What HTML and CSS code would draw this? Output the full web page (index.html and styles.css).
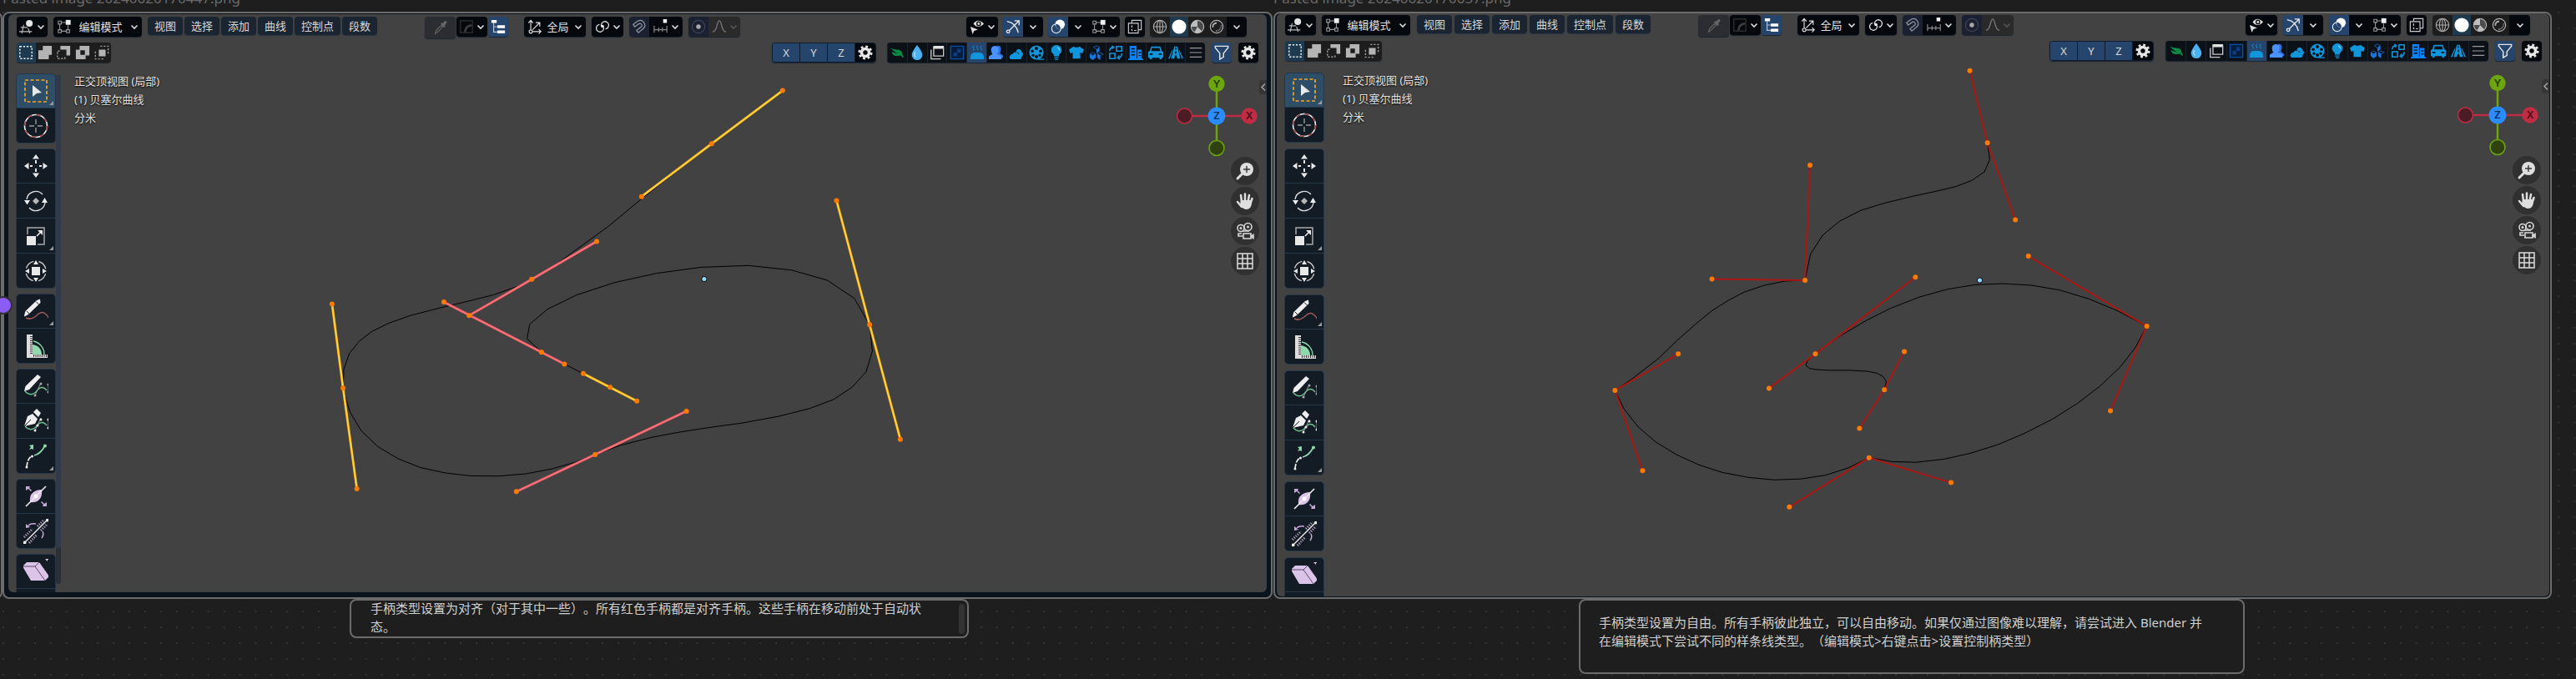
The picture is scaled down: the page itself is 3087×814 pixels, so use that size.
FILE: index.html
```
<!DOCTYPE html>
<html lang="zh-CN">
<head>
<meta charset="utf-8">
<title>曲线手柄类型</title>
<link rel="stylesheet" href="styles.css">
</head>
<body>
<svg class="defs" aria-hidden="true">
  <symbol id="chev" viewBox="0 0 10 10"><path d="M1.500 3.500 5 7l3.500-3.500" fill="none" stroke="currentColor" stroke-width="1.600"/></symbol>
  <symbol id="editor" viewBox="0 0 20 20"><g fill="none" stroke="#bbb" stroke-width="1.300"><path d="M2 11h9M0 16.500h17M6 7.500 3.500 19M12 12l2 7"/></g><circle cx="13.500" cy="5.500" r="4.500" fill="#e4e4e4"/></symbol>
  <symbol id="edit" viewBox="0 0 20 20"><g fill="none" stroke="#9a9a9a" stroke-width="1.200"><path d="M2 2.500h4v4H2zM2 14h4v4H2zM13 14h4v4h-4zM6 4.500h6M4 6.500V14M6 16h7M15 8v6"/></g><rect x="12" y="1" width="6.500" height="6.500" fill="#eee"/></symbol>
  <symbol id="dropper" viewBox="0 0 20 20"><path d="m3 18 1-4 7-7 2 2-7 7z" fill="none" stroke="#666" stroke-width="1.300"/><path d="m10 5 5 5 1.500-1.500-1-1.500 2.500-3q1-2-.5-2.700-1-.8-2.500.7L12.500 4.500 11.500 3.500z" fill="#666"/></symbol>
  <symbol id="curvebox" viewBox="0 0 20 20"><path d="M2 2h16v16H2z" fill="none" stroke="#333" stroke-width="1.300"/><path d="M8 17q1-8 9-9" fill="none" stroke="#3c3c3c" stroke-width="3"/></symbol>
  <symbol id="tree" viewBox="0 0 20 20"><path d="M4 5v12h6M4 10h6" fill="none" stroke="#b8c2d0" stroke-width="1.300"/><path d="M1 1h7v4H1zM9 8h10v4H9zM9 15h10v4H9z" fill="#fff"/></symbol>
  <symbol id="orient" viewBox="0 0 20 20"><g fill="none" stroke="#ddd" stroke-width="1.300"><path d="M4.500 14V2M1.500 5l3-3.500 3 3.500M7 16.500h11M15 13.500l3 3-3 3M7 14l9-9M11 4.500h5.500V10"/><circle cx="4.500" cy="16.500" r="2.200"/></g></symbol>
  <symbol id="pivot" viewBox="0 0 20 20"><g fill="none" stroke="#ddd" stroke-width="1.500"><path d="M8.500 9.500a5 5 0 1 1 5.500 3.500M11.500 10.500A5 5 0 1 1 6 7"/></g><circle cx="10" cy="9.500" r="2" fill="#eee"/></symbol>
  <symbol id="magnet" viewBox="0 0 20 20"><path d="m2 7 6-4.500q5-2.500 8 1.500 3.500 5-.5 8.500L9 18l-2.500-3L13 10q1.500-2-.2-3.500-1.200-1.200-3-.5L4 10z" fill="none" stroke="#8d94a2" stroke-width="1.400"/></symbol>
  <symbol id="snapinc" viewBox="0 0 20 20"><path d="M1 9v9M7 11v6M12 11v6M18 9v9M1 14h17" fill="none" stroke="#888" stroke-width="1.300"/><rect x="13" y="0" width="5" height="5" fill="#eee"/></symbol>
  <symbol id="prop" viewBox="0 0 20 20"><circle cx="10" cy="10" r="8.500" fill="none" stroke="#3c4558" stroke-width="1.300"/><circle cx="10" cy="10" r="3" fill="#aaa"/></symbol>
  <symbol id="falloff" viewBox="0 0 20 20"><path d="M1 17q4 0 6-9 1.500-6 3-6t3 6q2 9 6 9" fill="none" stroke="#777" stroke-width="1.500"/></symbol>
  <symbol id="eye" viewBox="0 0 20 20"><path d="M5 6q6-8 14 0-8 8-14 0z" fill="#ddd"/><circle cx="12" cy="6" r="2.400" fill="none" stroke="#111" stroke-width="1.500"/><path d="m1 10 3 10 2-4.500 5-1.500z" fill="#ddd"/></symbol>
  <symbol id="gizmo" viewBox="0 0 20 20"><g fill="none" stroke="#e6eaf0" stroke-width="1.500"><path d="M2 3q12 2 15 15M5 15 17.500 2.500M12 2h6v6"/><circle cx="3.500" cy="16.500" r="2"/></g></symbol>
  <symbol id="overlay" viewBox="0 0 20 20"><circle cx="12.500" cy="7" r="6.500" fill="#fff"/><circle cx="7.500" cy="12.500" r="6" fill="none" stroke="#dde3ea" stroke-width="1.300"/><path d="M7 10a6.500 6.500 0 0 0 6 3.500 6 6 0 0 0-6-7z" fill="#26456d"/></symbol>
  <symbol id="xray" viewBox="0 0 20 20"><g fill="none" stroke="#ccc" stroke-width="1.300"><path d="M6 5V1.500h12.500V14H15"/><path d="M1.500 5.500h13v13h-13z"/><path d="M6 8v7h6" stroke-dasharray="3 2"/></g></symbol>
  <symbol id="globe" viewBox="0 0 20 20"><g fill="none" stroke="#aaa" stroke-width="1.300"><circle cx="10" cy="10" r="8.500"/><ellipse cx="10" cy="10" rx="4" ry="8.500"/><path d="M1.500 10h17M10 1.500v17"/></g></symbol>
  <symbol id="solid" viewBox="0 0 20 20"><circle cx="10" cy="10" r="9.500" fill="#fff"/></symbol>
  <symbol id="material" viewBox="0 0 20 20"><circle cx="10" cy="10" r="8.500" fill="#4c4c4c" stroke="#b0b0b0" stroke-width="1.300"/><path d="M10 1.500A8.500 8.500 0 0 0 1.500 10H10zM10 10l-4 7.500Q11 20 16 16z" fill="#bdbdbd"/></symbol>
  <symbol id="rendered" viewBox="0 0 20 20"><circle cx="10" cy="10" r="8.500" fill="none" stroke="#b0b0b0" stroke-width="1.300"/><path d="M5 11q-1-5 5-6" fill="none" stroke="#b0b0b0" stroke-width="2"/><path d="M16 8q0 7-8 8" fill="none" stroke="#888" stroke-width="2" stroke-dasharray="1.500 1"/></symbol>
  <symbol id="m1" viewBox="0 0 20 20"><path d="M2 2h16v16H2z" fill="none" stroke="#e8f0f4" stroke-width="1.600" stroke-dasharray="2.500 2"/></symbol>
  <symbol id="m2" viewBox="0 0 20 20"><path d="M7 1h12v12h-4v6H1V7h6z" fill="#b4b4b4"/></symbol>
  <symbol id="m3" viewBox="0 0 20 20"><path d="M6 1h13v13h-5V6H6z" fill="#b4b4b4"/><path d="M12 16v2H2V8h3" fill="none" stroke="#999" stroke-width="1.600" stroke-dasharray="2.500 2"/></symbol>
  <symbol id="m4" viewBox="0 0 20 20"><path fill-rule="evenodd" d="M6 1h13v13h-5v5H1V6h5zM7 7v6h6V7z" fill="#b4b4b4"/></symbol>
  <symbol id="m5" viewBox="0 0 20 20"><path d="M6 6h9v9H6z" fill="#b4b4b4"/><path d="M8 1.500h10.500V12M12 18.500H1.500V7" fill="none" stroke="#999" stroke-width="1.600" stroke-dasharray="2.500 2"/></symbol>
  <symbol id="gear" viewBox="0 0 20 20"><circle cx="10" cy="10" r="5" fill="none" stroke="#e6e6e6" stroke-width="4"/><circle cx="10" cy="10" r="8" fill="none" stroke="#e6e6e6" stroke-width="3" stroke-dasharray="3.140 3.143"/></symbol>
  <symbol id="leaf" viewBox="0 0 20 20"><path d="M1 4q3 2 8 2 8 0 8 6l2 4-2 .5-2-3Q4 17 3 9l8 3Q5 8 1 4z" fill="#0c8a43"/></symbol>
  <symbol id="drop" viewBox="0 0 20 20"><path d="M10 0q7 9 7 13a7 7 0 0 1-14 0Q3 9 10 0z" fill="#4bb0f0"/><path d="M7 9q-2 4 1 7" stroke="#fff" fill="none"/></symbol>
  <symbol id="window" viewBox="0 0 20 20"><path d="M5 1h14v4H5z" fill="#e4e4e4"/><path d="M5.500 2v12.500h13V3M2 6v12.500h13" fill="none" stroke="#c8c8c8" stroke-width="1.500"/></symbol>
  <symbol id="checker" viewBox="0 0 20 20"><path d="M1.500 1.500h17v17h-17z" fill="#061c3c" stroke="#0a4fa6" stroke-width="1.500"/><path d="M10 5h5v5h-5zM5 10h5v5H5z" fill="#0b3c7d"/></symbol>
  <symbol id="steam" viewBox="0 0 20 20"><path d="M1 17q0-7 6-7h6q6 0 6 7v2H1z" fill="#1296db"/><path d="M5 7q2-1 0-3t1-3M10 7q2-1 0-3t1-3M15 7q2-1 0-3t1-3" fill="none" stroke="#1296db"/></symbol>
  <symbol id="users" viewBox="0 0 20 20"><path d="M11 1q6-1 5 6-1 3-1 4l4 3v3h-7z" fill="#2f6fd8"/><path d="M8 1q5 0 5 5t-2 6l6 3v4H0v-4l5-3Q3 10 3 6t5-5z" fill="#4a93ff"/></symbol>
  <symbol id="cloud" viewBox="0 0 20 20"><path d="M3 19q-3-1-2-4t4-3q3-5 8 0 5 0 4 4l-1 3z" fill="#1296db"/><path d="M9 9q3-6 7-2l3 5q0 3-3 4-1-5-7-7z" fill="#1296db"/></symbol>
  <symbol id="reel" viewBox="0 0 20 20"><circle cx="10" cy="10" r="9.500" fill="#1296db"/><g fill="#0c1118"><circle cx="10" cy="4.500" r="2.200"/><circle cx="10" cy="15.500" r="2.200"/><circle cx="4.500" cy="8" r="2"/><circle cx="15.500" cy="8" r="2"/><circle cx="5.500" cy="13.500" r="1.800"/><circle cx="14.500" cy="13.500" r="1.800"/></g><path d="M12 19h8" stroke="#1296db" stroke-width="1.500"/></symbol>
  <symbol id="bulb" viewBox="0 0 20 20"><path d="M10 0a7 7 0 0 1 7 7q0 3-3 5l-1 3H7l-1-3Q3 10 3 7a7 7 0 0 1 7-7zM7 16h6v1.500H7zM8 18.500h4V20H8z" fill="#1296db"/><path d="M11 3q3 1 3 4" stroke="#cfe9f8" fill="none"/></symbol>
  <symbol id="shirt" viewBox="0 0 20 20"><path d="m6 2 2 1h4l2-1 6 4-2 5-3-1v8H5v-8l-3 1-2-5z" fill="#1296db"/></symbol>
  <symbol id="cubes" viewBox="0 0 20 20"><path d="m10 1 4 2-4 3-4-3zM5 10l4 2-4 2-4-2zM15 10l4 2-4 2-4-2z" fill="none" stroke="#1c5faf"/><path d="m10 6 4-3v5l-4 3zM5 14l4-2v5l-4 3zM11 12l4 2v6l-4-3zM1 12l4 2v6l-4-3z" fill="#1677e0"/></symbol>
  <symbol id="swap" viewBox="0 0 20 20"><path d="M11 2h7v6h-7zM2 11h7v7H2zM2 8q0-5 5-5M5 1l2.500 2L5 5M18 11q0 6-5 6M15 14l-2.500 3 3 2" fill="none" stroke="#1296db" stroke-width="1.700"/></symbol>
  <symbol id="building" viewBox="0 0 20 20"><path d="M2 1h9v17h1V6h6v12h2v2H0v-2h2z" fill="#0a84ff"/><path d="M4 5h5M4 9h5M4 13h5M14 10h3M14 14h3" stroke="#0c1118" stroke-width="1.500"/></symbol>
  <symbol id="car" viewBox="0 0 20 20"><path fill-rule="evenodd" d="M4 2h12l2 6 2 1v8h-2v2h-3v-2H5v2H2v-2H0V9l2-1zm1 2L4 8h12l-1-4zM2 11v2h4v-2zM14 11v2h4v-2z" fill="#1296db"/></symbol>
  <symbol id="road" viewBox="0 0 20 20"><path d="M8 2h4l4 16h-4l-1-4H9l-1 4H4zM5 7 0 18h2l4-11zM15 7l5 11h-2L14 7z" fill="#1296db"/><path d="M10 3v3M10 8v4" stroke="#0c1118" stroke-width="1.500"/></symbol>
  <symbol id="lines" viewBox="0 0 20 20"><path d="M2 4h16M2 10h16M2 16h16" stroke="#999" stroke-width="1.300"/></symbol>
  <symbol id="funnel" viewBox="0 0 20 20"><path d="M1.500 1.500h17v2L12.500 11v5l-5 3V11l-6-7.500z" fill="none" stroke="#e6e6e6" stroke-width="1.600"/></symbol>

  <symbol id="t-select" viewBox="0 0 30 30"><path d="M2 2h26v26H2z" fill="none" stroke="#f5a623" stroke-width="1.700" stroke-dasharray="4 2.500"/><path d="m11 8 11 9-6 1-5 4z" fill="#e8e8e8"/></symbol>
  <symbol id="t-cursor" viewBox="0 0 30 30"><circle cx="15" cy="15" r="13.500" fill="none" stroke="#eee" stroke-width="1.600"/><circle cx="15" cy="15" r="13.500" fill="none" stroke="#a04444" stroke-width="1.600" stroke-dasharray="5.300 5.300"/><path d="M15 7v6M15 17v6M7 15h6M17 15h6" stroke="#999" stroke-width="1.400"/></symbol>
  <symbol id="t-move" viewBox="0 0 30 30"><path d="m15 1 4 5.500h-8zM15 29l4-5.500h-8zM1 15l5.500-4v8zM29 15l-5.500-4v8zM14 8h2v4h-2zM14 18h2v4h-2zM8 14h3v2H8zM19 14h3v2h-3z" fill="#e8e8e8"/></symbol>
  <symbol id="t-rotate" viewBox="0 0 30 30"><path d="M4 13A11 11 0 0 1 23 7M26 17A11 11 0 0 1 7 23" fill="none" stroke="#ddd" stroke-width="1.400"/><path d="M1 14h7l-3.500 5.500zM22 17h7l-3.500-6z" fill="#eee"/><path d="m15 11 4 4-4 4-4-4z" fill="#b8b8b8"/></symbol>
  <symbol id="t-scale" viewBox="0 0 30 30"><path d="M5 13V5h20v20h-8" fill="none" stroke="#aaa" stroke-width="1.500"/><path d="M4 15h11v11H4zM23 8v6l-6-6z" fill="#e8e8e8"/><path d="m16 15 5-5" stroke="#e8e8e8" stroke-width="1.600"/></symbol>
  <symbol id="t-transform" viewBox="0 0 30 30"><circle cx="15" cy="15" r="12" fill="none" stroke="#ccc" stroke-width="1.400" stroke-dasharray="12.500 6.350" stroke-dashoffset="-3.200"/><path d="M10 10h10v10H10zM15 2l3 5h-6zM15 28l3-5h-6zM2 15l5-3v6zM28 15l-5-3v6z" fill="#e8e8e8"/></symbol>
  <symbol id="t-annotate" viewBox="0 0 30 30"><path d="m1 20 1.500-5L16 2l4-1.500.5 4.500L6 19l-4.500 2.500z" fill="#eee"/><path d="m15 3.500 3.500 3.500M4 15l3 3" stroke="#131b24"/><path d="M3 23q6 3 12-2 7-7 11-3 3 2 4 5" fill="none" stroke="#a55a5a" stroke-width="1.500"/></symbol>
  <symbol id="t-measure" viewBox="0 0 30 30"><path d="M12 9a16 16 0 0 1 13 16" fill="none" stroke="#8fd9ae" stroke-width="1.300"/><path d="M11 13a12 12 0 0 1 11 12H11z" fill="#8fd9ae"/><path d="M4 1h7v24h18v4H4z" fill="#ddd"/><path d="M9.500 3v21M12 26.500h16" stroke="#333" stroke-width="3" stroke-dasharray="1 1.500"/></symbol>
  <symbol id="t-draw" viewBox="0 0 30 30"><path d="M2 21q6 7 13 1 7-10 13-2" fill="none" stroke="#6fbf8f" stroke-width="1.500"/><path d="m1 21 1.500-6L17 1l4 3L7 19z" fill="#eee"/><path d="m14 26 7-15M30 22V13" stroke="#999"/><path d="M14 26h0M21 12h0M30 22h0M30 13h0" stroke="#aaa" stroke-width="3" stroke-linecap="round"/></symbol>
  <symbol id="t-pen" viewBox="0 0 30 30"><path d="M2 21q6 7 13 1 7-10 13-2" fill="none" stroke="#6fbf8f" stroke-width="1.500"/><path d="M1 21 5 9l6-3 6 6-3 6zM12 4l4-4 5 5-3 5z" fill="#eee"/><path d="m1 21 8-8" stroke="#131b24"/><path d="m14 26 7-15M30 23V13" stroke="#999"/><path d="M14 26h0M21 13h0M30 23h0M30 13h0M17 20h0" stroke="#eee" stroke-width="3" stroke-linecap="round"/></symbol>
  <symbol id="t-extend" viewBox="0 0 30 30"><path d="M4 28q1-11 6-13" fill="none" stroke="#eee" stroke-width="1.700" stroke-dasharray="6 1.500"/><path d="M13 14Q21 12 26 2" fill="none" stroke="#8fd9ae" stroke-width="1.700"/><circle cx="26" cy="2.500" r="2" fill="#8fd9ae"/><path d="M4 28h0M10.500 15h0" stroke="#eee" stroke-width="3" stroke-linecap="round"/><path d="M12 1v6l-2-1-3 1 2-3-2-2z" fill="#8fd9ae"/></symbol>
  <symbol id="t-radius" viewBox="0 0 30 30"><path d="M22 7q1 8-3 12-4 4-11 3-1-8 3-11 4-4 11-4z" fill="#dcc3e8"/><path d="M3 27 27 3" stroke="#e8e8e8" stroke-width="1.700"/><circle cx="15" cy="15" r="2.500" fill="#fff"/><path d="M3 3h5L7 5l3 3-1 1-3-3-3 2zM28 27h-5l1-2-3-3 1-1 3 3 3-2z" fill="#c9a9d8"/></symbol>
  <symbol id="t-tilt" viewBox="0 0 30 30"><path d="M2 28 29 1" stroke="#eee" stroke-width="1.500"/><path d="m1 22 10-10M7 29l9-10M17 9l8-8M21 14l8-8" stroke="#b9a3c4" stroke-width="3" stroke-dasharray="1.200 1.600"/><circle cx="1.500" cy="28.500" r="2" fill="#eee"/><circle cx="29" cy="1.500" r="2" fill="#eee"/><path d="M15 6Q9 5 6 8M23 15q2 4-1 8" stroke="#c9a9d8" fill="none" stroke-width="1.500"/><path d="m3 6 5 4-5 1z" fill="#c9a9d8"/></symbol>
  <symbol id="t-shear" viewBox="0 0 30 30"><path d="m-1 9 5-5h15l12 17-5 5H9z" fill="#dcc3e8"/><path d="M-1 9h15l12 17M14 9l5-5" fill="none" stroke="#3a3142" stroke-width=".8"/><path d="m26 0 3-3v2h3v2h-3v2z" fill="#dcc3e8"/></symbol>

  <symbol id="n-zoom" viewBox="0 0 34 34"><circle cx="19" cy="15" r="8" fill="#dedede"/><path d="m14 20-6 6" stroke="#dedede" stroke-width="3" stroke-linecap="round"/><path d="M19 11v8M15 15h8" stroke="#333" stroke-width="1.400"/></symbol>
  <symbol id="n-pan" viewBox="0 0 34 34"><path d="m13 18-1-8M17 17V8.500M20.500 18l1.500-8M23.500 20l2-6M13 24l-5-6" stroke="#dedede" stroke-width="2.500" stroke-linecap="round"/><path d="M12 16h12l1 4q-1 7-6 7-5 0-8-6z" fill="#dedede"/></symbol>
  <symbol id="n-camera" viewBox="0 0 34 34"><g fill="none" stroke="#d8d8d8" stroke-width="1.600"><circle cx="12" cy="13.500" r="4"/><circle cx="20.500" cy="12" r="4.500"/><path d="M15 20h9v6h-9zM13 20H9v3h5M14 17h8M27 21.500l-3 2 3 2z"/></g><circle cx="12" cy="13.500" r="1.500" fill="#d8d8d8"/><circle cx="20.500" cy="12" r="1.500" fill="#d8d8d8"/></symbol>
  <symbol id="n-grid" viewBox="0 0 34 34"><path d="M8 8h18v18H8zM14 8v18M20 8v18M8 14h18M8 20h18" fill="none" stroke="#dcdcdc" stroke-width="1.500"/></symbol>
</svg>

<main class="canvas">
  <svg class="dots" aria-hidden="true">
    <pattern id="dots" width="18.9" height="18.9" patternUnits="userSpaceOnUse" x="3" y="14"><rect width="2" height="2" fill="#333"/></pattern>
    <rect width="100%" height="100%" fill="url(#dots)"/>
  </svg>

  <section class="nodes">
    <article class="node">
      <h2 class="node-title">Pasted image 20240620170447.png</h2>
      <div class="frame">
        <div class="view">
          <svg class="drawing" viewBox="10 17 1508 693" preserveAspectRatio="xMinYMin meet" aria-label="对齐手柄曲线">
            <g transform="translate(380 80) scale(.47194 .34439)">
              <polyline class="curve" points="1002,268 882,397 822,462 742,553 710,585 650,645 610,685 545,740 512,763 448,794 384,816 310,840 240,865 183,892 141,920 108,954 82,998 68,1052 66,1119 74,1160 84,1203 112,1267 154,1322 205,1364 262,1395 325,1414 389,1424 460,1425 530,1417 596,1400 655,1377 706,1350 770,1318 850,1290 920,1272 990,1257 1080,1240 1172,1217 1250,1190 1312,1158 1359,1115 1394,1062 1410,990 1403,898 1364,806 1295,743 1205,708 1095,692 975,698 862,719 756,751 660,794 585,844 540,896 533,947 570,994 628,1035 744,1116"/>
              <path class="handle-rim" d="M1182 83 1002 268 824 452M1319 466 1403 898 1481 1297M38 826 66 1119 101 1469M676 1068 812 1164"/>
              <path class="handle auto" d="M1182 83 1002 268 824 452M1319 466 1403 898 1481 1297M38 826 66 1119 101 1469M676 1068 812 1164"/>
              <path class="handle-rim aligned-rim" d="M710 608 545 740 386 866M322 819 628 1035M938 1199 706 1350 506 1479"/>
              <path class="handle aligned" d="M710 608 545 740 386 866M322 819 628 1035M938 1199 706 1350 506 1479"/>
              <path class="point" d="M1182 83h0M1002 268h0M824 452h0M1319 466h0M1403 898h0M1481 1297h0M38 826h0M66 1119h0M101 1469h0M676 1068h0M744 1116h0M812 1164h0M710 608h0M545 740h0M386 866h0M322 819h0M570 994h0M628 1035h0M938 1199h0M706 1350h0M506 1479h0"/>
              <path class="origin-rim" d="M983 739h0"/><path class="origin" d="M983 739h0"/>
            </g>
          </svg>
          <div class="bar bar-top">
            <button class="btn w37" aria-label="编辑器类型"><svg class="i"><use href="#editor"/></svg><svg class="c"><use href="#chev"/></svg></button>
            <label class="field mode"><svg class="i"><use href="#edit"/></svg><select aria-label="模式"><option>编辑模式</option></select><svg class="c"><use href="#chev"/></svg></label>
            <nav class="menus"><button>视图</button><button>选择</button><button>添加</button><button>曲线</button><button>控制点</button><button>段数</button></nav>
            <div class="tight">
              <button class="btn dim w37 tall" aria-label="吸管"><svg class="i"><use href="#dropper"/></svg></button>
              <button class="btn w37" aria-label="曲线预设"><svg class="i"><use href="#curvebox"/></svg><svg class="c"><use href="#chev"/></svg></button>
              <button class="btn on w24" aria-label="层级"><svg class="i"><use href="#tree"/></svg></button>
            </div>
            <label class="field orient"><svg class="i"><use href="#orient"/></svg><select aria-label="坐标系"><option>全局</option></select><svg class="c"><use href="#chev"/></svg></label>
            <button class="btn w38" aria-label="轴心点"><svg class="i"><use href="#pivot"/></svg><svg class="c"><use href="#chev"/></svg></button>
            <div class="group"><button class="btn navy w24" aria-label="吸附"><svg class="i"><use href="#magnet"/></svg></button><button class="btn w40" aria-label="吸附设置"><svg class="i"><use href="#snapinc"/></svg><svg class="c"><use href="#chev"/></svg></button></div>
            <div class="group"><button class="btn navy w24" aria-label="衰减编辑"><svg class="i"><use href="#prop"/></svg></button><button class="btn off w38" aria-label="衰减类型"><svg class="i"><use href="#falloff"/></svg><svg class="c"><use href="#chev"/></svg></button></div>
            <div class="right-tools">
              <button class="btn w38" aria-label="可见性"><svg class="i"><use href="#eye"/></svg><svg class="c"><use href="#chev"/></svg></button>
              <div class="group"><button class="btn on w24" aria-label="控件"><svg class="i"><use href="#gizmo"/></svg></button><button class="btn w24" aria-label="控件设置"><svg class="c"><use href="#chev"/></svg></button></div>
              <div class="group"><button class="btn on w24" aria-label="叠加层"><svg class="i"><use href="#overlay"/></svg></button><button class="btn w24" aria-label="叠加层设置"><svg class="c"><use href="#chev"/></svg></button><button class="btn w38" aria-label="编辑叠加层"><svg class="i"><use href="#edit"/></svg><svg class="c"><use href="#chev"/></svg></button></div>
              <button class="btn w24" aria-label="透视模式"><svg class="i"><use href="#xray"/></svg></button>
              <div class="group"><button class="btn flat w24" aria-label="线框"><svg class="i"><use href="#globe"/></svg></button><button class="btn teal w22" aria-label="实体"><svg class="i"><use href="#solid"/></svg></button><button class="btn flat w22" aria-label="材质预览"><svg class="i"><use href="#material"/></svg></button><button class="btn flat w24" aria-label="渲染"><svg class="i"><use href="#rendered"/></svg></button><button class="btn w24" aria-label="着色设置"><svg class="c"><use href="#chev"/></svg></button></div>
            </div>
          </div>
          <div class="bar bar-sub">
            <div class="group modes"><button class="btn teal" aria-label="新选择"><svg class="i"><use href="#m1"/></svg></button><button class="btn flat" aria-label="扩展"><svg class="i"><use href="#m2"/></svg></button><button class="btn flat" aria-label="减去"><svg class="i"><use href="#m3"/></svg></button><button class="btn flat" aria-label="反转"><svg class="i"><use href="#m4"/></svg></button><button class="btn flat" aria-label="交集"><svg class="i"><use href="#m5"/></svg></button></div>
            <div class="group xyz"><button class="btn on">X</button><button class="btn on">Y</button><button class="btn on">Z</button><button class="btn w25" aria-label="镜像设置"><svg class="i"><use href="#gear"/></svg></button></div>
            <div class="group shelf"><button aria-label="叶"><svg class="i"><use href="#leaf"/></svg></button><button aria-label="水"><svg class="i"><use href="#drop"/></svg></button><button aria-label="窗口"><svg class="i"><use href="#window"/></svg></button><button aria-label="棋盘"><svg class="i"><use href="#checker"/></svg></button><button class="active" aria-label="蒸汽"><svg class="i"><use href="#steam"/></svg></button><button aria-label="人物"><svg class="i"><use href="#users"/></svg></button><button aria-label="云"><svg class="i"><use href="#cloud"/></svg></button><button aria-label="胶片"><svg class="i"><use href="#reel"/></svg></button><button aria-label="灯"><svg class="i"><use href="#bulb"/></svg></button><button aria-label="衣服"><svg class="i"><use href="#shirt"/></svg></button><button aria-label="方块"><svg class="i"><use href="#cubes"/></svg></button><button aria-label="交换"><svg class="i"><use href="#swap"/></svg></button><button aria-label="建筑"><svg class="i"><use href="#building"/></svg></button><button aria-label="汽车"><svg class="i"><use href="#car"/></svg></button><button aria-label="道路"><svg class="i"><use href="#road"/></svg></button><button aria-label="列表"><svg class="i"><use href="#lines"/></svg></button></div>
            <button class="btn on w24" aria-label="过滤"><svg class="i"><use href="#funnel"/></svg></button>
            <button class="btn w24" aria-label="设置"><svg class="i"><use href="#gear"/></svg></button>
          </div>
          <div class="work">
            <aside class="tools">
              <div class="tool-group"><button class="more active" aria-label="框选"><svg><use href="#t-select"/></svg></button><button aria-label="游标"><svg><use href="#t-cursor"/></svg></button></div>
              <div class="tool-group"><button aria-label="移动"><svg><use href="#t-move"/></svg></button><button aria-label="旋转"><svg><use href="#t-rotate"/></svg></button><button class="more" aria-label="缩放"><svg><use href="#t-scale"/></svg></button><button aria-label="变换"><svg><use href="#t-transform"/></svg></button></div>
              <div class="tool-group"><button class="more" aria-label="标注"><svg><use href="#t-annotate"/></svg></button><button aria-label="测量"><svg><use href="#t-measure"/></svg></button></div>
              <div class="tool-group"><button aria-label="绘制"><svg><use href="#t-draw"/></svg></button><button aria-label="曲线钢笔"><svg><use href="#t-pen"/></svg></button><button class="more" aria-label="挤出"><svg><use href="#t-extend"/></svg></button></div>
              <div class="tool-group"><button aria-label="半径"><svg><use href="#t-radius"/></svg></button><button aria-label="倾斜"><svg><use href="#t-tilt"/></svg></button></div>
              <div class="tool-group"><button aria-label="切变"><svg><use href="#t-shear"/></svg></button><button aria-label="随机"></button></div>
            </aside>
            <div class="track"><div class="thumb"></div></div>
            <div class="info"><p>正交顶视图 (局部)</p><p>(1) 贝塞尔曲线</p><p>分米</p></div>
            <div class="nav3d">
              <svg class="axes" viewBox="0 0 100 100"><path d="M50 12v77" stroke="#6ca50d" stroke-width="2.500"/><path d="M12 50h77" stroke="#bd2e44" stroke-width="2.500"/><circle cx="11.500" cy="50" r="9" fill="#4b1c24" stroke="#bd2e44" stroke-width="1.500"/><circle cx="50" cy="88.500" r="9" fill="#30420f" stroke="#6ca50d" stroke-width="1.500"/><circle cx="50" cy="11.500" r="9.700" fill="#6ca50d"/><circle cx="89" cy="50" r="9.700" fill="#c02c43"/><circle cx="50" cy="50" r="10.500" fill="#2b8cff"/><text x="50" y="16" fill="#243a05">Y</text><text x="89" y="54" fill="#420c15">X</text><text x="50" y="54" fill="#0c2f5a">Z</text></svg>
              <button aria-label="缩放视图"><svg><use href="#n-zoom"/></svg></button><button aria-label="平移视图"><svg><use href="#n-pan"/></svg></button><button aria-label="相机视图"><svg><use href="#n-camera"/></svg></button><button aria-label="正交视图"><svg><use href="#n-grid"/></svg></button>
            </div>
          </div>
          <button class="side-tab" aria-label="展开侧栏"><svg viewBox="0 0 9 17"><path d="M7 4.500 3 8.500l4 4" fill="none" stroke="#aaa" stroke-width="1.400"/></svg></button>
        </div>
      </div>
    </article>

    <article class="node second">
      <h2 class="node-title">Pasted image 20240620170657.png</h2>
      <div class="frame">
        <div class="view">
          <svg class="drawing" viewBox="1530 16 1525 699" preserveAspectRatio="xMinYMin meet" aria-label="自由手柄曲线">
            <g transform="translate(1900 60) scale(.45918 .3699)">
              <polyline class="curve" points="1049,301 1055,355 1041,395 1008,423 965,443 910,459 850,475 780,496 718,520 664,554 619,600 587,662 573,746 520,749 465,763 415,784 373,811 330,845 295,880 240,940 190,1000 120,1067 77,1103 100,1162 138,1222 183,1270 237,1311 295,1344 357,1369 425,1385 492,1393 562,1390 626,1378 686,1354 740,1321 800,1334 862,1336 935,1326 1004,1307 1078,1278 1146,1242 1219,1196 1284,1145 1342,1090 1395,1028 1435,964 1465,895 1390,846 1315,807 1238,778 1162,762 1087,757 1015,761 945,775 870,801 798,836 735,875 665,926 600,985 579,1008 575,1022 585,1032 605,1036 640,1038 690,1038 735,1041 760,1047 777,1058 785,1075 780,1101"/>
              <path class="handle free" d="M1003 67 1049 301 1122 550M586 373 573 746 330 742M1156 668 1465 895 1370 1169M861 736 600 985 479 1096M832 977 780 1101 715 1226M242 985 77 1103 149 1363M532 1481 740 1321 954 1402"/>
              <path class="point" d="M1003 67h0M1049 301h0M1122 550h0M586 373h0M573 746h0M330 742h0M1156 668h0M1465 895h0M1370 1169h0M861 736h0M600 985h0M479 1096h0M832 977h0M780 1101h0M715 1226h0M242 985h0M77 1103h0M149 1363h0M532 1481h0M740 1321h0M954 1402h0"/>
              <path class="origin-rim" d="M1029 746h0"/><path class="origin" d="M1029 746h0"/>
            </g>
          </svg>
          <div class="bar bar-top">
            <button class="btn w37" aria-label="编辑器类型"><svg class="i"><use href="#editor"/></svg><svg class="c"><use href="#chev"/></svg></button>
            <label class="field mode"><svg class="i"><use href="#edit"/></svg><select aria-label="模式"><option>编辑模式</option></select><svg class="c"><use href="#chev"/></svg></label>
            <nav class="menus"><button>视图</button><button>选择</button><button>添加</button><button>曲线</button><button>控制点</button><button>段数</button></nav>
            <div class="tight">
              <button class="btn dim w37 tall" aria-label="吸管"><svg class="i"><use href="#dropper"/></svg></button>
              <button class="btn w37" aria-label="曲线预设"><svg class="i"><use href="#curvebox"/></svg><svg class="c"><use href="#chev"/></svg></button>
              <button class="btn on w24" aria-label="层级"><svg class="i"><use href="#tree"/></svg></button>
            </div>
            <label class="field orient"><svg class="i"><use href="#orient"/></svg><select aria-label="坐标系"><option>全局</option></select><svg class="c"><use href="#chev"/></svg></label>
            <button class="btn w38" aria-label="轴心点"><svg class="i"><use href="#pivot"/></svg><svg class="c"><use href="#chev"/></svg></button>
            <div class="group"><button class="btn navy w24" aria-label="吸附"><svg class="i"><use href="#magnet"/></svg></button><button class="btn w40" aria-label="吸附设置"><svg class="i"><use href="#snapinc"/></svg><svg class="c"><use href="#chev"/></svg></button></div>
            <div class="group"><button class="btn navy w24" aria-label="衰减编辑"><svg class="i"><use href="#prop"/></svg></button><button class="btn off w38" aria-label="衰减类型"><svg class="i"><use href="#falloff"/></svg><svg class="c"><use href="#chev"/></svg></button></div>
            <div class="right-tools">
              <button class="btn w38" aria-label="可见性"><svg class="i"><use href="#eye"/></svg><svg class="c"><use href="#chev"/></svg></button>
              <div class="group"><button class="btn on w24" aria-label="控件"><svg class="i"><use href="#gizmo"/></svg></button><button class="btn w24" aria-label="控件设置"><svg class="c"><use href="#chev"/></svg></button></div>
              <div class="group"><button class="btn on w24" aria-label="叠加层"><svg class="i"><use href="#overlay"/></svg></button><button class="btn w24" aria-label="叠加层设置"><svg class="c"><use href="#chev"/></svg></button><button class="btn w38" aria-label="编辑叠加层"><svg class="i"><use href="#edit"/></svg><svg class="c"><use href="#chev"/></svg></button></div>
              <button class="btn w24" aria-label="透视模式"><svg class="i"><use href="#xray"/></svg></button>
              <div class="group"><button class="btn flat w24" aria-label="线框"><svg class="i"><use href="#globe"/></svg></button><button class="btn teal w22" aria-label="实体"><svg class="i"><use href="#solid"/></svg></button><button class="btn flat w22" aria-label="材质预览"><svg class="i"><use href="#material"/></svg></button><button class="btn flat w24" aria-label="渲染"><svg class="i"><use href="#rendered"/></svg></button><button class="btn w25" aria-label="着色设置"><svg class="c"><use href="#chev"/></svg></button></div>
            </div>
          </div>
          <div class="bar bar-sub">
            <div class="group modes"><button class="btn teal" aria-label="新选择"><svg class="i"><use href="#m1"/></svg></button><button class="btn flat" aria-label="扩展"><svg class="i"><use href="#m2"/></svg></button><button class="btn flat" aria-label="减去"><svg class="i"><use href="#m3"/></svg></button><button class="btn flat" aria-label="反转"><svg class="i"><use href="#m4"/></svg></button><button class="btn flat" aria-label="交集"><svg class="i"><use href="#m5"/></svg></button></div>
            <div class="group xyz"><button class="btn on">X</button><button class="btn on">Y</button><button class="btn on">Z</button><button class="btn w25" aria-label="镜像设置"><svg class="i"><use href="#gear"/></svg></button></div>
            <div class="group shelf"><button aria-label="叶"><svg class="i"><use href="#leaf"/></svg></button><button aria-label="水"><svg class="i"><use href="#drop"/></svg></button><button aria-label="窗口"><svg class="i"><use href="#window"/></svg></button><button aria-label="棋盘"><svg class="i"><use href="#checker"/></svg></button><button class="active" aria-label="蒸汽"><svg class="i"><use href="#steam"/></svg></button><button aria-label="人物"><svg class="i"><use href="#users"/></svg></button><button aria-label="云"><svg class="i"><use href="#cloud"/></svg></button><button aria-label="胶片"><svg class="i"><use href="#reel"/></svg></button><button aria-label="灯"><svg class="i"><use href="#bulb"/></svg></button><button aria-label="衣服"><svg class="i"><use href="#shirt"/></svg></button><button aria-label="方块"><svg class="i"><use href="#cubes"/></svg></button><button aria-label="交换"><svg class="i"><use href="#swap"/></svg></button><button aria-label="建筑"><svg class="i"><use href="#building"/></svg></button><button aria-label="汽车"><svg class="i"><use href="#car"/></svg></button><button aria-label="道路"><svg class="i"><use href="#road"/></svg></button><button aria-label="列表"><svg class="i"><use href="#lines"/></svg></button></div>
            <button class="btn on w24" aria-label="过滤"><svg class="i"><use href="#funnel"/></svg></button>
            <button class="btn w24" aria-label="设置"><svg class="i"><use href="#gear"/></svg></button>
          </div>
          <div class="work">
            <aside class="tools">
              <div class="tool-group"><button class="more active" aria-label="框选"><svg><use href="#t-select"/></svg></button><button aria-label="游标"><svg><use href="#t-cursor"/></svg></button></div>
              <div class="tool-group"><button aria-label="移动"><svg><use href="#t-move"/></svg></button><button aria-label="旋转"><svg><use href="#t-rotate"/></svg></button><button class="more" aria-label="缩放"><svg><use href="#t-scale"/></svg></button><button aria-label="变换"><svg><use href="#t-transform"/></svg></button></div>
              <div class="tool-group"><button class="more" aria-label="标注"><svg><use href="#t-annotate"/></svg></button><button aria-label="测量"><svg><use href="#t-measure"/></svg></button></div>
              <div class="tool-group"><button aria-label="绘制"><svg><use href="#t-draw"/></svg></button><button aria-label="曲线钢笔"><svg><use href="#t-pen"/></svg></button><button class="more" aria-label="挤出"><svg><use href="#t-extend"/></svg></button></div>
              <div class="tool-group"><button aria-label="半径"><svg><use href="#t-radius"/></svg></button><button aria-label="倾斜"><svg><use href="#t-tilt"/></svg></button></div>
              <div class="tool-group"><button aria-label="切变"><svg><use href="#t-shear"/></svg></button><button aria-label="随机"></button></div>
            </aside>
            <div class="info"><p>正交顶视图 (局部)</p><p>(1) 贝塞尔曲线</p><p>分米</p></div>
            <div class="nav3d">
              <svg class="axes" viewBox="0 0 100 100"><path d="M50 12v77" stroke="#6ca50d" stroke-width="2.500"/><path d="M12 50h77" stroke="#bd2e44" stroke-width="2.500"/><circle cx="11.500" cy="50" r="9" fill="#4b1c24" stroke="#bd2e44" stroke-width="1.500"/><circle cx="50" cy="88.500" r="9" fill="#30420f" stroke="#6ca50d" stroke-width="1.500"/><circle cx="50" cy="11.500" r="9.700" fill="#6ca50d"/><circle cx="89" cy="50" r="9.700" fill="#c02c43"/><circle cx="50" cy="50" r="10.500" fill="#2b8cff"/><text x="50" y="16" fill="#243a05">Y</text><text x="89" y="54" fill="#420c15">X</text><text x="50" y="54" fill="#0c2f5a">Z</text></svg>
              <button aria-label="缩放视图"><svg><use href="#n-zoom"/></svg></button><button aria-label="平移视图"><svg><use href="#n-pan"/></svg></button><button aria-label="相机视图"><svg><use href="#n-camera"/></svg></button><button aria-label="正交视图"><svg><use href="#n-grid"/></svg></button>
            </div>
          </div>
          <button class="side-tab" aria-label="展开侧栏"><svg viewBox="0 0 9 17"><path d="M7 4.500 3 8.500l4 4" fill="none" stroke="#aaa" stroke-width="1.400"/></svg></button>
        </div>
      </div>
    </article>
  </section>

  <section class="notes">
    <div class="note note-a"><p>手柄类型设置为对齐（对于其中一些）。所有红色手柄都是对齐手柄。这些手柄在移动前处于自动状<br>态。</p><span class="note-scroll"></span></div>
    <div class="note note-b"><p>手柄类型设置为自由。所有手柄彼此独立，可以自由移动。如果仅通过图像难以理解，请尝试进入 Blender 并<br>在编辑模式下尝试不同的样条线类型。（编辑模式&gt;右键点击&gt;设置控制柄类型）</p></div>
  </section>

  <span class="neighbor"></span>
  <span class="port"></span>
</main>
</body>
</html>
```
FILE: styles.css
```
* { box-sizing: border-box; }
body {
  margin: 0;
  background: #1e1e1e;
  color: #d8d8d8;
  font: 13px/20px "Noto Sans", "Noto Sans CJK SC", sans-serif;
  text-spacing-trim: space-all;
}
p, h2 { margin: 0; }
button, select { font: inherit; color: inherit; border: 0; padding: 0; margin: 0; background: none; }
button { display: flex; align-items: center; justify-content: center; }
svg { display: block; flex: none; }
.defs { display: none; }

.canvas {
  position: relative;
  height: 100vh;
  overflow: hidden;
  display: grid;
  grid-template-rows: minmax(0, 1fr) 96px;
}
.dots { position: absolute; inset: 0; width: 100%; height: 100%; }
.nodes, .notes {
  position: relative;
  display: grid;
  grid-template-columns: minmax(0, 1522fr) minmax(0, 1532fr);
  column-gap: 1px;
  padding: 0 29px 0 3px;
}
.nodes { min-height: 0; }
.node { display: flex; flex-direction: column; min-height: 0; }
.node-title {
  height: 14px;
  display: flex;
  align-items: flex-end;
  font: 400 17px/24px "Noto Sans", sans-serif;
  color: #6a6a6a;
  padding-bottom: 4px;
}
.frame {
  flex: 1;
  min-height: 0;
  display: flex;
  padding: 1px 5px 6px;
  border: 2px solid #6c6c6c;
  border-radius: 8px;
  background: #0b141c;
}
.second .frame { padding: 0 1px 1px 2px; }
.view {
  position: relative;
  flex: 1;
  min-width: 0;
  display: flex;
  flex-direction: column;
  overflow: hidden;
  padding-top: 3px;
  background: #424242;
  border-radius: 6px;
}
.second .view { padding-top: 2px; }

.drawing { position: absolute; inset: 0; width: 100%; height: 100%; }
.drawing * { fill: none; vector-effect: non-scaling-stroke; }
.curve { stroke: #000; stroke-width: 1px; }
.handle { stroke-width: 2px; }
.handle-rim { stroke: #d98a1c; stroke-width: 3px; }
.aligned-rim { stroke: #c8545a; }
.auto { stroke: #ffd43a; }
.aligned { stroke: #ff7078; }
.free { stroke: #ab1813; }
.point { stroke: #ff7a00; stroke-width: 6px; stroke-linecap: round; }
.origin { stroke: #8fdcff; stroke-width: 5px; stroke-linecap: round; }
.origin-rim { stroke: #14181a; stroke-width: 7px; stroke-linecap: round; }

.bar { position: relative; display: flex; align-items: flex-start; height: 24px; padding-left: 10px; flex: none; }
.bar-top { padding-right: 24px; gap: 7px; }
.bar-sub { margin-top: 7px; padding-right: 10px; gap: 8px; }
.second .bar-top { padding-right: 23px; }
.second .bar-sub { padding-right: 9px; }
.btn, .field {
  height: 24px;
  gap: 3px;
  border-radius: 4px;
  background: #05080d;
  box-shadow: 0 1px 1px #1b2430;
}
.i { width: 18px; height: 18px; }
.c { width: 10px; height: 10px; color: #ddd; }
.w22 { width: 22px; }
.w24 { width: 24px; }
.w25 { width: 25px; }
.w37 { width: 37px; }
.w38 { width: 38px; }
.w40 { width: 40px; }
.on { background: #26456d; }
.navy { background: #1b2130; }
.teal { background: #1d3a4e; }
.flat { background: #1d1d1d; }
.dim { background: #2c2d32; }
.off { background: #2a2a2a; }
.off .c { color: #555; }
.tall { height: 26px; }
.field { display: flex; align-items: center; justify-content: space-between; padding: 0 4px; }
.field select { appearance: none; width: auto; line-height: 20px; color: #e0e0e0; }
.mode { width: 106px; }
.orient { width: 74px; margin-left: 12px; }
.menus { display: flex; gap: 2px; }
.second .menus { gap: 3px; margin-left: 1px; }
.menus button {
  height: 22px;
  padding: 0 8px;
  border-radius: 4px;
  background: #1b2532;
  box-shadow: 0 1px 1px #2a3442;
  line-height: 20px;
}
.tight { display: flex; gap: 1px; margin-left: 50px; }
.group { display: flex; border-radius: 4px; overflow: hidden; box-shadow: 0 1px 1px #1b2430; }
.group .btn { border-radius: 0; box-shadow: none; }
.right-tools { display: flex; gap: 6px; margin-left: auto; }
.second .right-tools { gap: 7px; }

.modes { width: 113px; }
.modes .btn { flex: 1; }
.second .modes { width: 116px; }
.xyz { margin-left: auto; margin-right: 5px; border: 1px solid #101c2c; }
.second .xyz { margin-right: 6px; }
.xyz .btn { height: 22px; width: 33px; border-right: 1px solid #101c2c; font-size: 13px; }
.xyz .btn:last-child { width: 24px; border: 0; }
.shelf { width: 381px; background: #0c1118; }
.second .shelf { width: 387px; }
.shelf button { flex: 1; height: 24px; border-left: 1px solid #1a2230; }
.shelf .active { background: #26456d; }

.work { position: relative; display: flex; flex: 1; min-height: 0; margin-top: 13px; padding-left: 9px; }
.second .work { margin-top: 14px; }
.tools { display: flex; flex-direction: column; gap: 6px; flex: none; }
.second .tools { gap: 7px; }
.tool-group {
  flex: none;
  width: 48px;
  border: 1px solid #26374a;
  border-radius: 5px;
  overflow: hidden;
  background: #131b24;
}
.tool-group button { position: relative; width: 100%; height: 40px; }
.tool-group button + button { height: 42px; border-top: 1px solid #26374a; }
.tool-group svg { width: 30px; height: 30px; overflow: visible; }
.tool-group .active { background: #2e4d66; }
.more::after {
  content: "";
  position: absolute;
  right: 2px;
  bottom: 3px;
  border-left: 5px solid transparent;
  border-bottom: 5px solid #9a9a9a;
}
.track { width: 6px; margin: 2px 0 10px; background: #2b2f36; border-radius: 3px; }
.thumb { height: 93%; background: #303a48; border-radius: 3px; }
.info { margin-top: -2px; padding-left: 16px; font-size: 13px; line-height: 22px; color: #e2e2e2; text-shadow: 0 1px 2px #000; }
.second .info { padding-left: 22px; }
.nav3d { display: flex; flex-direction: column; align-items: flex-end; gap: 2px; margin-left: auto; padding-right: 9px; }
.axes { width: 100px; height: 100px; margin: 1px 1px -3px 0; font: 600 12px Inter, sans-serif; text-anchor: middle; }
.second .axes { margin-right: 2px; }
.second .nav3d { padding-right: 10px; }
.nav3d button { width: 34px; height: 34px; border-radius: 50%; background: #303030; }
.nav3d button svg { width: 34px; height: 34px; }
.side-tab { position: absolute; right: 0; top: 79px; width: 9px; height: 17px; background: #353535; border-radius: 3px 0 0 3px; }
.side-tab svg { width: 9px; height: 17px; }

.notes { align-items: start; }
.note {
  position: relative;
  border: 2px solid #6c6c6c;
  border-radius: 8px;
  background: #1e1e1e;
  font: 15px/22px "Noto Sans", "Noto Sans CJK SC", sans-serif;
  color: #d0d0d0;
  white-space: nowrap;
}
.note p { margin-top: -2px; }
.note-a { width: 742px; height: 47px; padding: 0 23px; margin-left: 416px; }
.note-b { width: 798px; padding: 17px 22px 27px; margin-left: 366px; }
.note-scroll { position: absolute; right: 3px; top: 4px; bottom: 3px; width: 7px; border-radius: 4px; background: #333; }

.neighbor { position: absolute; left: -20px; top: 14px; bottom: 96px; width: 23px; border: 2px solid #6c6c6c; border-radius: 8px; }
.port { position: absolute; left: -7px; top: 355px; width: 22px; height: 22px; border: 2px solid #33303a; border-radius: 50%; background: #8b5cf6; }
```
